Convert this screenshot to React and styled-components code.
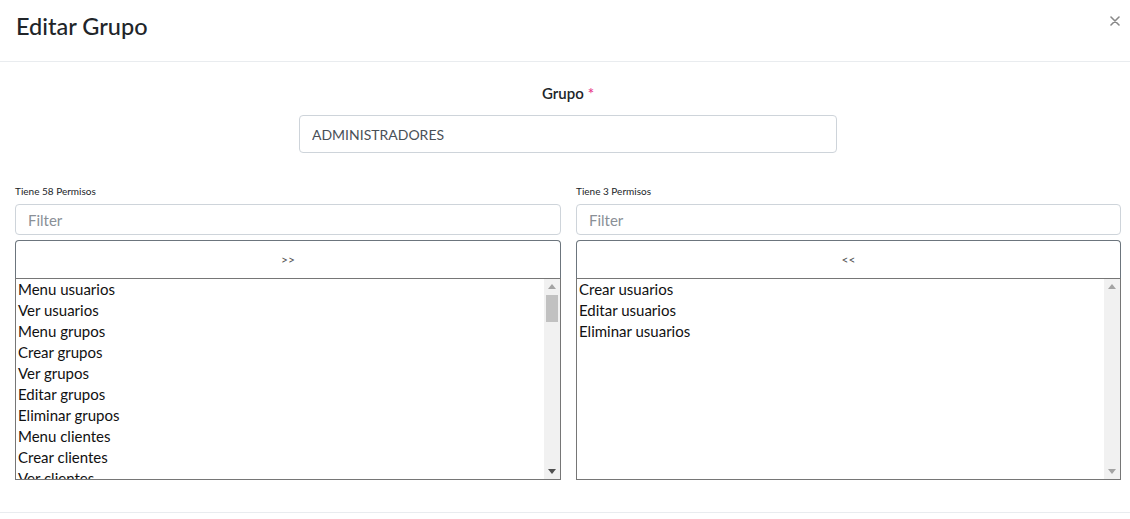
import React from "react";
import styled, { createGlobalStyle } from "styled-components";

const Global = createGlobalStyle`
  html, body { margin: 0; padding: 0; background: #fff; }
  body { font-family: Lato, "Liberation Sans", sans-serif; color: #212529; }
  * { box-sizing: border-box; }
`;

const Modal = styled.div`
  width: 1130px;
  height: 519px;
  display: flex;
  flex-direction: column;
  background: #fff;
`;

const Header = styled.div`
  height: 62px;
  display: flex;
  align-items: center;
  justify-content: space-between;
  padding: 0 8px 0 16px;
  border-bottom: 1px solid #e9ecef;
`;

const Title = styled.h5`
  margin: 0;
  font-size: 23.5px;
  font-weight: 500;
  color: #212529;
  padding-bottom: 9px;
`;

const Close = styled.button`
  border: none;
  background: none;
  padding: 0;
  margin-top: -20px;
  width: 14px;
  height: 14px;
  display: flex;
  align-items: center;
  justify-content: center;
  cursor: pointer;
`;

const Body = styled.div`
  flex: 1;
  display: flex;
  flex-direction: column;
  padding: 0 9px 0 15px;
  border-bottom: 1px solid #e9ecef;
`;

const GroupField = styled.div`
  display: flex;
  flex-direction: column;
  align-items: center;
  padding-top: 21px;
`;

const Label = styled.label`
  font-size: 15px;
  font-weight: 600;
  color: #212529;
  line-height: 20px;
  margin-bottom: 12px;
`;

const Required = styled.span`
  color: #e83e8c;
  margin-left: 4px;
`;

const TextInput = styled.input`
  width: 538px;
  height: 38px;
  border: 1px solid #ced4da;
  border-radius: 4px;
  padding: 0 12px;
  font-family: inherit;
  font-size: 14px;
  color: #495057;
  outline: none;
`;

const Columns = styled.div`
  display: grid;
  grid-template-columns: 546px 545px;
  column-gap: 15px;
  margin-top: 32px;
`;

const Column = styled.div`
  display: flex;
  flex-direction: column;
`;

const Count = styled.div`
  font-size: 10px;
  line-height: 13px;
  color: #212529;
  margin-bottom: 6px;
`;

const Filter = styled.input`
  height: 31px;
  border: 1px solid #ced4da;
  border-radius: 4px;
  padding: 0 12px;
  font-family: inherit;
  font-size: 15px;
  color: #495057;
  outline: none;
  margin-bottom: 5px;
  &::placeholder { color: #8a9097; }
`;

const MoveButton = styled.button`
  height: 38px;
  border: 1px solid #6c757d;
  border-bottom: none;
  border-radius: 4px 4px 0 0;
  background: #fff;
  font-family: inherit;
  font-size: 12px;
  color: #555;
  display: flex;
  align-items: center;
  justify-content: center;
  padding: 0;
`;

const ListBox = styled.div`
  height: 202px;
  border: 1px solid #767676;
  display: flex;
`;

const Options = styled.div`
  flex: 1;
  overflow: hidden;
  padding: 0 0 0 2px;
`;

const Option = styled.div`
  font-size: 15px;
  line-height: 21px;
  color: #111;
  white-space: nowrap;
`;

const Scrollbar = styled.div`
  width: 16px;
  background: #f1f1f1;
  display: flex;
  flex-direction: column;
  align-items: center;
`;

const Arrow = styled.div`
  height: 15px;
  width: 16px;
  display: flex;
  align-items: center;
  justify-content: center;
`;

const Track = styled.div`
  flex: 1;
  width: 100%;
  padding: 1px 2px;
`;

const Thumb = styled.div`
  height: 27px;
  background: #c1c1c1;
`;

const Footer = styled.div`
  height: 6px;
`;

const CloseIcon = () => (
  <svg width="10" height="10" viewBox="0 0 10 10">
    <path d="M1 1 L9 9 M9 1 L1 9" stroke="#888" strokeWidth="1.6" strokeLinecap="round" />
  </svg>
);

const Tri = ({ up, dark }) => (
  <svg width="8" height="5" viewBox="0 0 8 5">
    <path d={up ? "M0 5 L4 0 L8 5 Z" : "M0 0 L8 0 L4 5 Z"} fill={dark ? "#505050" : "#a3a3a3"} />
  </svg>
);

const left = [
  "Menu usuarios",
  "Ver usuarios",
  "Menu grupos",
  "Crear grupos",
  "Ver grupos",
  "Editar grupos",
  "Eliminar grupos",
  "Menu clientes",
  "Crear clientes",
  "Ver clientes",
];

const right = ["Crear usuarios", "Editar usuarios", "Eliminar usuarios"];

const Picker = ({ count, label, items, thumb }) => (
  <Column>
    <Count>Tiene {count} Permisos</Count>
    <Filter placeholder="Filter" />
    <MoveButton>{label}</MoveButton>
    <ListBox>
      <Options>
        {items.map((t) => (
          <Option key={t}>{t}</Option>
        ))}
      </Options>
      <Scrollbar>
        <Arrow><Tri up dark={false} /></Arrow>
        <Track>{thumb && <Thumb />}</Track>
        <Arrow><Tri dark={thumb} /></Arrow>
      </Scrollbar>
    </ListBox>
  </Column>
);

export default function App() {
  return (
    <>
      <Global />
      <Modal>
        <Header>
          <Title>Editar Grupo</Title>
          <Close aria-label="Close"><CloseIcon /></Close>
        </Header>
        <Body>
          <GroupField>
            <Label>
              Grupo<Required>*</Required>
            </Label>
            <TextInput defaultValue="ADMINISTRADORES" />
          </GroupField>
          <Columns>
            <Picker count={58} label=">>" items={left} thumb />
            <Picker count={3} label="<<" items={right} thumb={false} />
          </Columns>
        </Body>
        <Footer />
      </Modal>
    </>
  );
}
